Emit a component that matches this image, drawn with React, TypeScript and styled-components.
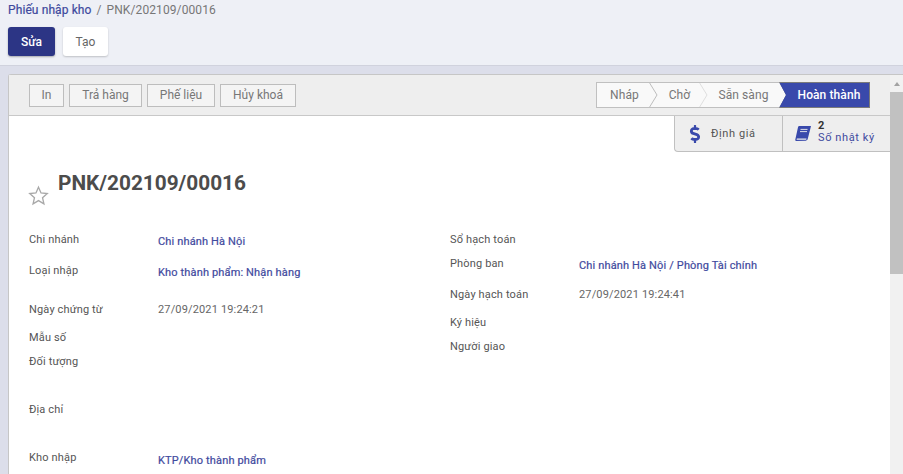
import React from "react";
import styled, { createGlobalStyle } from "styled-components";
import { FaDollarSign } from "react-icons/fa";

const Global = createGlobalStyle`
  html, body { margin: 0; padding: 0; height: 100%; overflow: hidden; }
  body { font-family: Roboto, "Liberation Sans", sans-serif; font-size: 12px; color: #666; }
`;

const Page = styled.div`
  width: 903px; height: 474px; display: flex; flex-direction: column; overflow: hidden; background: #dcdeea;
`;
const ControlPanel = styled.header`
  height: 66px; flex: none; background: #eef0f6; border-bottom: 1px solid #d0d2dd;
  padding: 3px 8px 0; box-sizing: border-box;
`;
const Breadcrumb = styled.div`
  display: flex; gap: 5px; font-size: 12px; line-height: 15px; color: #777; letter-spacing: .1px;
`;
const Crumb = styled.a`color: #3f4a9e; font-weight: 400; -webkit-text-stroke: .2px #3f4a9e;`;
const Actions = styled.div`display: flex; gap: 8px; margin-top: 9px;`;
const PrimaryButton = styled.button`
  width: 47px; height: 29px; border: 0; border-radius: 3px; background: #2c3585; color: #fff;
  font: 500 12px Roboto, sans-serif; box-shadow: 0 1px 2px rgba(0,0,0,.3);
`;
const SecondaryButton = styled.button`
  width: 45px; height: 29px; border: 0; border-radius: 3px; background: #fff; color: #666;
  font: 400 12px Roboto, sans-serif; box-shadow: 0 1px 2px rgba(0,0,0,.2);
`;
const Body = styled.main`
  flex: 1; min-height: 0; padding: 8px 0 0 8px; display: flex;
`;
const Sheet = styled.section`
  flex: 1; min-width: 0; display: flex; background: #fff;
  border: 1px solid #c6c6c6; border-right: 0; border-bottom: 0; border-radius: 3px 0 0 0;
`;
const SheetMain = styled.div`flex: 1; min-width: 0; display: flex; flex-direction: column;`;
const StatusBar = styled.div`
  height: 41px; flex: none; box-sizing: border-box; background: #eeeeee; border-bottom: 1px solid #c8c8c8;
  display: flex; align-items: center; justify-content: space-between; padding: 0 20px 0 20px;
`;
const Tools = styled.div`display: flex; gap: 5px;`;
const ToolButton = styled.button<{ $w: number }>`
  width: ${(p) => p.$w}px; height: 23px; padding: 0; box-sizing: border-box; background: #f4f4f4; border: 1px solid #bdbdbd;
  color: #777; font: 400 12px Roboto, sans-serif;
`;
const Steps = styled.div`
  display: flex; height: 26px; box-sizing: border-box; border: 1px solid #c0c0c0; background: #f9f9f9;
`;
const Step = styled.div<{ $w: number; $pad?: number }>`
  width: ${(p) => p.$w}px; box-sizing: border-box; padding-left: ${(p) => p.$pad ?? 0}px;
  display: flex; align-items: center; justify-content: center; color: #777;
  position: relative; font-size: 12px; letter-spacing: .1px;
`;
const StepTip = styled.svg<{ $c: string }>`
  position: absolute; right: -6px; top: 0; width: 9px; height: 24px; fill: none; stroke: ${(p) => p.$c};
`;
const ActiveStep = styled.div`
  width: 91px; margin: -1px -1px -1px 0; background: #7a7a7a; display: flex;
  clip-path: polygon(0 0, 100% 0, 100% 100%, 0 100%, 7px 50%);
`;
const ActiveInner = styled.div`
  flex: 1; margin: 1px 1px 1px 0; background: #3949ab; color: #fff; font-weight: 500; letter-spacing: .1px;
  display: flex; align-items: center; justify-content: center; padding-left: 10px; font-size: 12px;
`;
const StatRow = styled.div`display: flex; justify-content: flex-end; flex: none;`;
const StatBox = styled.div`
  display: flex; height: 36px; box-sizing: border-box; background: #eeeeee; border-left: 1px solid #c0c0c0;
  border-bottom: 1px solid #c0c0c0; border-radius: 0 0 0 4px;
`;
const StatButton = styled.div<{ $w: number; $pad: number; $gap: number }>`
  width: ${(p) => p.$w}px; box-sizing: border-box; padding-left: ${(p) => p.$pad}px; display: flex; align-items: center;
  gap: ${(p) => p.$gap}px;
  color: #555; font-size: 11px; letter-spacing: .6px;
  & + & { border-left: 1px solid #c0c0c0; }
  svg { color: #3949ab; flex: none; }
`;
const StatText = styled.div`display: flex; flex-direction: column; line-height: 11px; color: #3f4a9e; margin-top: -3px;`;
const StatCount = styled.b`color: #333; font-size: 11px; line-height: 9px; font-weight: 700; margin-bottom: 2px;`;
const Content = styled.div`flex: 1; min-height: 0; padding: 17px 0 0 19px; overflow: hidden;`;
const TitleRow = styled.div`display: flex; align-items: flex-start; gap: 9px;`;
const Star = styled.svg`width: 21px; height: 21px; margin-top: 16px; fill: none; stroke: #a8a8a8; stroke-width: 1.5; flex: none;`;
const Title = styled.h1`
  margin: 0; font: 700 20.8px/28px Roboto, sans-serif; color: #4c4c4c;
`;
const FormGrid = styled.div`display: flex; margin: 27px 0 0 1px;`;
const Column = styled.div`width: 421px; flex: none;`;
const Field = styled.div<{ $h: number }>`
  height: ${(p) => p.$h}px; display: flex; align-items: flex-start;
`;
const Label = styled.div`width: 129px; flex: none; line-height: 14px; color: #555; font-size: 11px; letter-spacing: .15px;`;
const Value = styled.div<{ $link?: boolean; $off?: number }>`
  line-height: 14px; padding-top: ${(p) => p.$off ?? 0}px; font-size: 11px; letter-spacing: .15px;
  color: ${(p) => (p.$link ? "#3f4a9e" : "#666")};
  ${(p) => (p.$link ? "-webkit-text-stroke: .2px #3f4a9e;" : "")}
`;
const Scrollbar = styled.div`
  width: 13px; flex: none; background: #f1f1f1; display: flex; flex-direction: column; align-items: center;
`;
const ScrollArrow = styled.div`
  width: 0; height: 0; margin-top: 7px; border-left: 3.5px solid transparent; border-right: 3.5px solid transparent;
  border-bottom: 4px solid #a3a3a3;
`;
const ScrollThumb = styled.div`width: 13px; height: 182px; background: #c1c1c1; margin-top: 6px;`;

const left = [
  { h: 31, l: "Chi nhánh", v: "Chi nhánh Hà Nội", link: true, off: 2 },
  { h: 39, l: "Loại nhập", v: "Kho thành phẩm: Nhận hàng", link: true, off: 2 },
  { h: 28, l: "Ngày chứng từ", v: "27/09/2021 19:24:21" },
  { h: 24, l: "Mẫu số" },
  { h: 48, l: "Đối tượng" },
  { h: 48, l: "Địa chỉ" },
  { h: 24, l: "Kho nhập", v: "KTP/Kho thành phẩm", link: true, off: 3 },
];
const right = [
  { h: 24, l: "Sổ hạch toán" },
  { h: 31, l: "Phòng ban", v: "Chi nhánh Hà Nội / Phòng Tài chính", link: true, off: 2 },
  { h: 28, l: "Ngày hạch toán", v: "27/09/2021 19:24:41" },
  { h: 24, l: "Ký hiệu" },
  { h: 24, l: "Người giao" },
];
type F = { h: number; l: string; v?: string; link?: boolean; off?: number };
const Col = ({ items }: { items: F[] }) => (
  <Column>
    {items.map((f) => (
      <Field key={f.l} $h={f.h}>
        <Label>{f.l}</Label>
        {f.v && <Value $link={f.link} $off={f.off}>{f.v}</Value>}
      </Field>
    ))}
  </Column>
);
const Tip = ({ c }: { c: string }) => (
  <StepTip $c={c} viewBox="0 0 9 24"><path d="M0 -1L8 12L0 25" /></StepTip>
);
const BookIcon = () => (
  <svg width="17" height="17" viewBox="0 0 17 17">
    <path fill="currentColor" d="M4.2 1H16l-.3 1.2-2.9 11.6c-.2.9-.9 1.6-1.9 1.9L1.6 16c-1 .1-1.5-.6-1.3-1.5L3 2.2C3.2 1.5 3.6 1 4.2 1z" />
    <path fill="#eeeeee" d="M1.9 13.6h9.6l-.3 1.1H1.6z" />
    <path fill="none" stroke="#eeeeee" strokeWidth=".9" d="M5.5 4.4h7M5 6.6h7" />
  </svg>
);

export default function App() {
  return (
    <Page>
      <Global />
      <ControlPanel>
        <Breadcrumb><Crumb>Phiếu nhập kho</Crumb><span>/</span><span>PNK/202109/00016</span></Breadcrumb>
        <Actions>
          <PrimaryButton>Sửa</PrimaryButton>
          <SecondaryButton>Tạo</SecondaryButton>
        </Actions>
      </ControlPanel>
      <Body>
        <Sheet>
          <SheetMain>
            <StatusBar>
              <Tools>
                <ToolButton $w={35}>In</ToolButton>
                <ToolButton $w={73}>Trả hàng</ToolButton>
                <ToolButton $w={68}>Phế liệu</ToolButton>
                <ToolButton $w={76}>Hủy khoá</ToolButton>
              </Tools>
              <Steps>
                <Step $w={55}>Nháp<Tip c="#bdbdbd" /></Step>
                <Step $w={50} $pad={5}>Chờ<Tip c="#dedede" /></Step>
                <Step $w={77} $pad={6}>Sẵn sàng</Step>
                <ActiveStep><ActiveInner>Hoàn thành</ActiveInner></ActiveStep>
              </Steps>
            </StatusBar>
            <StatRow>
              <StatBox>
                <StatButton $w={107} $pad={11} $gap={7}><FaDollarSign size={18} />Định giá</StatButton>
                <StatButton $w={108} $pad={12} $gap={6}>
                  <BookIcon />
                  <StatText><StatCount>2</StatCount><span>Số nhật ký</span></StatText>
                </StatButton>
              </StatBox>
            </StatRow>
            <Content>
              <TitleRow>
                <Star viewBox="0 0 24 24"><path d="M12 2.5l2.9 6.6 7.1.7-5.4 4.7 1.6 7-6.2-3.7-6.2 3.7 1.6-7L2 9.8l7.1-.7z" /></Star>
                <Title>PNK/202109/00016</Title>
              </TitleRow>
              <FormGrid>
                <Col items={left} />
                <Col items={right} />
              </FormGrid>
            </Content>
          </SheetMain>
          <Scrollbar><ScrollArrow /><ScrollThumb /></Scrollbar>
        </Sheet>
      </Body>
    </Page>
  );
}
